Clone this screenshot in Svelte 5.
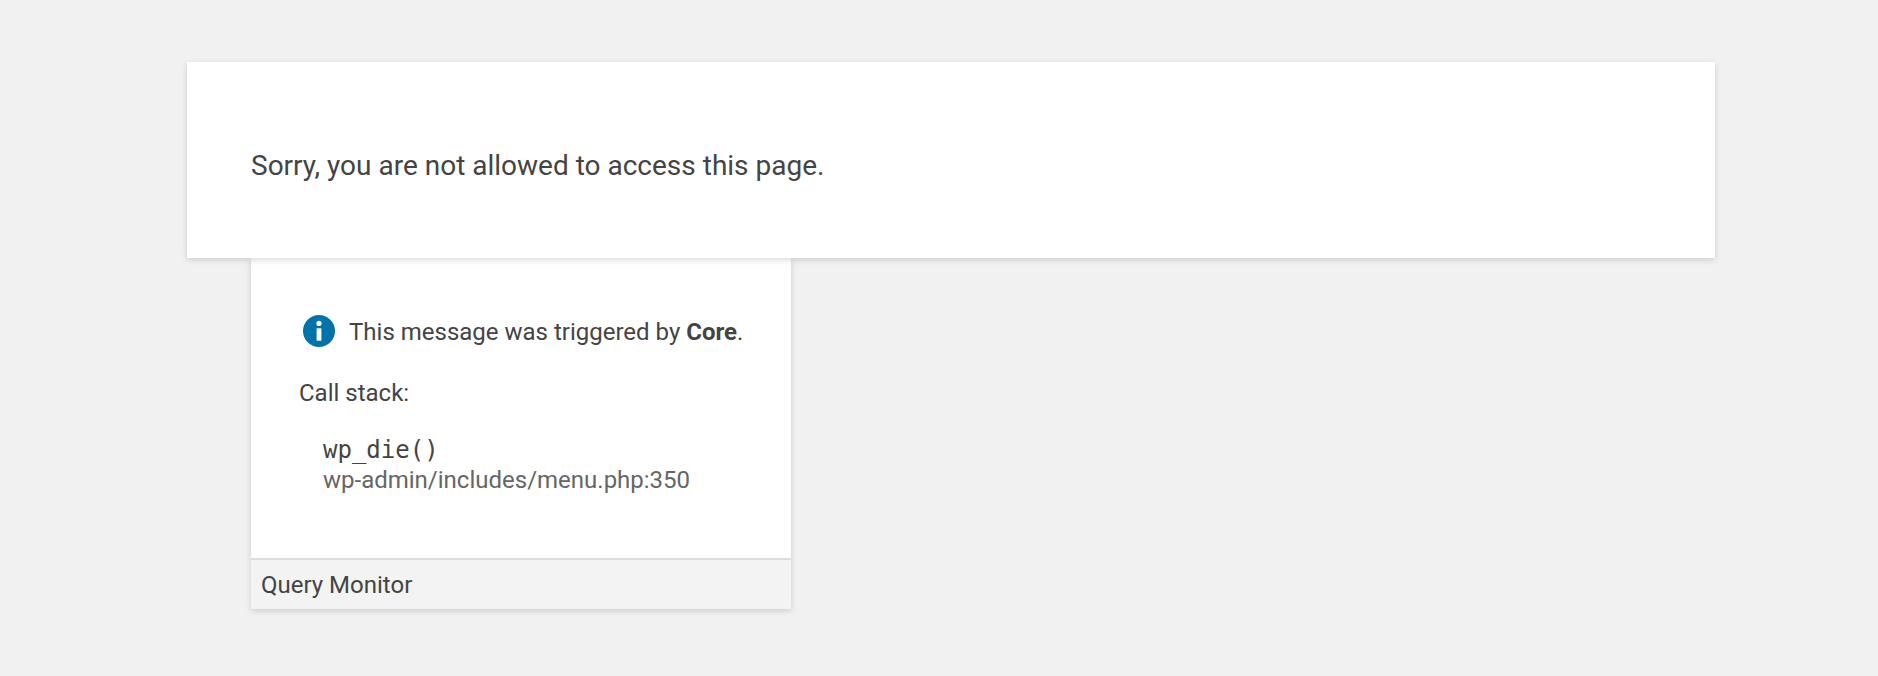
<script>
  const title = 'Sorry, you are not allowed to access this page.';
</script>

<div class="page">
  <div class="die">
    <p>{title}</p>
  </div>
  <div class="qm">
    <div class="qm-body">
      <div class="notice">
        <svg class="icon" viewBox="0 0 32 32" width="32" height="32" aria-hidden="true">
          <circle cx="16" cy="16" r="16" fill="#0073aa" />
          <circle cx="16" cy="8.4" r="2.6" fill="#fff" />
          <rect x="13.6" y="13.3" width="4.8" height="12.4" fill="#fff" />
        </svg>
        <span>This message was triggered by <strong>Core</strong>.</span>
      </div>
      <p class="label">Call stack:</p>
      <div class="stack">
        <code>wp_die()</code>
        <div class="file">wp-admin/includes/menu.php:350</div>
      </div>
    </div>
    <div class="qm-foot">Query Monitor</div>
  </div>
</div>

<style>
  :global(body) {
    margin: 0;
    background: #f1f1f1;
    color: #444;
    font-family: Roboto, sans-serif;
  }
  .page {
    padding: 62px 0 0 187px;
    height: 614px;
    overflow: hidden;
  }
  .die {
    position: relative;
    z-index: 1;
    box-sizing: border-box;
    width: 1528px;
    height: 196px;
    padding: 12px 64px 0;
    display: flex;
    align-items: center;
    background: #fff;
    box-shadow: 0 2px 6px rgba(0, 0, 0, 0.15);
  }
  .die p {
    margin: 0;
    font-size: 28px;
    line-height: 40px;
  }
  .qm {
    box-sizing: border-box;
    width: 540px;
    height: 351px;
    margin-left: 64px;
    display: flex;
    flex-direction: column;
    background: #fff;
    box-shadow: 0 2px 6px rgba(0, 0, 0, 0.15);
  }
  .qm-body {
    flex: 1;
    padding: 57px 0 0 48px;
  }
  .notice {
    display: flex;
    align-items: center;
    gap: 14px;
    margin-left: 4px;
    font-size: 24px;
    line-height: 34px;
    white-space: nowrap;
  }
  .icon {
    flex: none;
    margin-top: -2px;
  }
  strong {
    font-weight: 700;
  }
  .label {
    margin: 27px 0 0;
    font-size: 24px;
    line-height: 34px;
  }
  .stack {
    margin: 25px 0 0 24px;
  }
  code {
    display: block;
    font-family: "DejaVu Sans Mono", monospace;
    font-size: 24px;
    line-height: 30px;
  }
  .file {
    font-size: 24px;
    line-height: 30px;
    color: #666;
  }
  .qm-foot {
    box-sizing: border-box;
    height: 51px;
    padding: 0 10px;
    display: flex;
    align-items: center;
    background: #f3f3f3;
    border-top: 2px solid #ddd;
    font-size: 24px;
  }
</style>
